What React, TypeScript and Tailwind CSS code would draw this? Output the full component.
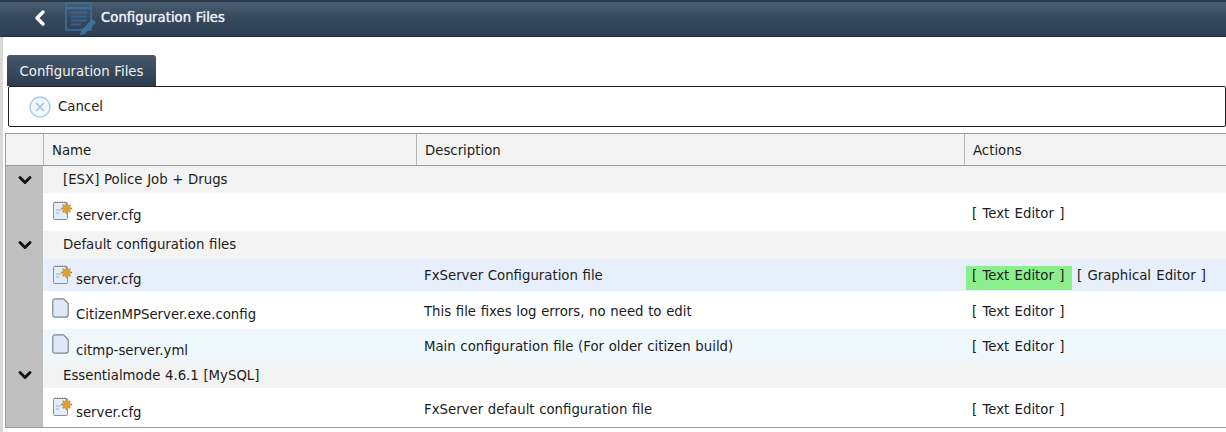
import { ChevronDown, ChevronLeft } from 'lucide-react'

function HeaderIcon() {
  return (
    <svg width="36" height="33" viewBox="0 0 36 33" fill="none" stroke="#3a719f" className="shrink-0">
      <rect x="1" y="1" width="25" height="27" strokeWidth="1.5" />
      <path d="M1 6h25" strokeWidth="2" />
      <path d="M6 10.5h16M6 14.5h16M6 18.5h16M6 22.5h10" strokeWidth="2" opacity="0.7" />
      <path d="M15 33l1.5-5 11-11 3.5 3.5-11 11z" fill="#3a719f" stroke="none" />
    </svg>
  )
}

function CancelIcon() {
  return (
    <svg width="22" height="22" viewBox="0 0 22 22" fill="none" className="shrink-0">
      <circle cx="11" cy="11" r="10" fill="#f2f8fc" stroke="#a9d0e8" strokeWidth="1.5" />
      <path d="M7 7l8 8M15 7l-8 8" stroke="#a5c4dc" strokeWidth="1.5" />
    </svg>
  )
}

function CfgIcon() {
  return (
    <svg width="21" height="21" viewBox="0 0 21 21" fill="none" className="shrink-0">
      <rect x="1.5" y="2.5" width="14" height="17" rx="1" fill="#e3edf9" stroke="#8c8c8c" />
      <path d="M3 2.5v-1M5.5 2.5v-1M8 2.5v-1M10.5 2.5v-1M13 2.5v-1" stroke="#777777" />
      <path d="M4 10h5M4 13h3" stroke="#8fb5dc" />
      <path d="M14.5 3v11M9 8.5h11M10.7 4.7l7.6 7.6M18.3 4.7l-7.6 7.6" stroke="#b58429" strokeWidth="1.5" />
      <circle cx="14.5" cy="8.5" r="4.2" fill="#e0a030" />
    </svg>
  )
}

function FileIcon() {
  return (
    <svg width="17" height="20" viewBox="0 0 17 20" fill="none" className="shrink-0">
      <path d="M.8 3a2.2 2.2 0 0 1 2.2-2.2h8.5l4.7 4.7v11.3a2.4 2.4 0 0 1-2.4 2.4H3a2.2 2.2 0 0 1-2.2-2.2z" fill="#dfe9f7" stroke="#7a8794" strokeWidth="1.2" />
    </svg>
  )
}

function EditorLink({ label, active }: { label: string; active?: boolean }) {
  return (
    <span
      className={
        active
          ? 'inline-block h-[24px] w-[106px] bg-[#8bf08b] pl-[6px] leading-[20px] [word-spacing:1px]'
          : 'inline-block h-[24px] px-[5px] first:pl-[6px] leading-[20px] [word-spacing:1px]'
      }
    >
      [ {label} ]
    </span>
  )
}

type FileRow = {
  icon: 'cfg' | 'file'
  name: string
  description?: string
  graphical?: boolean
  active?: boolean
  rowClass: string
  iconTop: string
  nameTop: string
  cellTop: string
}

const groups: { title: string; titleClass: string; textClass: string; rows: FileRow[] }[] = [
  {
    title: '[ESX] Police Job + Drugs',
    titleClass: 'h-[27px]',
    textClass: '',
    rows: [
      {
        icon: 'cfg',
        name: 'server.cfg',
        rowClass: 'h-[38px] bg-white',
        iconTop: 'pt-[7px]',
        nameTop: 'mt-[6px]',
        cellTop: 'pt-[11px]',
      },
    ],
  },
  {
    title: 'Default configuration files',
    titleClass: 'h-[28px]',
    textClass: '',
    rows: [
      {
        icon: 'cfg',
        name: 'server.cfg',
        description: 'FxServer Configuration file',
        graphical: true,
        active: true,
        rowClass: 'h-[32px] bg-[#e6effb]',
        iconTop: 'pt-[5px]',
        nameTop: 'mt-[6px]',
        cellTop: 'pt-[7px]',
      },
      {
        icon: 'file',
        name: 'CitizenMPServer.exe.config',
        description: 'This file fixes log errors, no need to edit',
        rowClass: 'h-[38px] bg-white',
        iconTop: 'pt-[7px]',
        nameTop: 'mt-[7px]',
        cellTop: 'pt-[11px]',
      },
      {
        icon: 'file',
        name: 'citmp-server.yml',
        description: 'Main configuration file (For older citizen build)',
        rowClass: 'h-[32px] bg-[#eff8fc]',
        iconTop: 'pt-[5px]',
        nameTop: 'mt-[7px]',
        cellTop: 'pt-[8px]',
      },
    ],
  },
  {
    title: 'Essentialmode 4.6.1 [MySQL]',
    titleClass: 'h-[27px]',
    textClass: 'pt-[2px]',
    rows: [
      {
        icon: 'cfg',
        name: 'server.cfg',
        description: 'FxServer default configuration file',
        rowClass: 'h-[39px] bg-white',
        iconTop: 'pt-[8px]',
        nameTop: 'mt-[7px]',
        cellTop: 'pt-[12px]',
      },
    ],
  },
]

export default function App() {
  return (
    <div className="h-[432px] w-[1226px] overflow-hidden bg-white font-['DejaVu_Sans',sans-serif] text-[13.3px] text-[#1c1c1c] [word-spacing:0.4px]">
      <div className="flex h-[37px] items-center border-t-2 border-b border-t-[#2a3744] border-b-[#1d2a38] bg-gradient-to-b from-[#4a5d71] via-[#35475b] to-[#2f4054] pb-[2px] pl-[28px]">
        <ChevronLeft className="h-6 w-6 text-white" strokeWidth={3.5} />
        <div className="ml-[13px]">
          <HeaderIcon />
        </div>
        <span className="text-[#e8edf2] [text-shadow:0_0_1px_#ffffff]">Configuration Files</span>
      </div>

      <div className="h-[395px] border-l-[3px] border-[#d8d8d8] pl-[4px] pt-[18px]">
        <div className="flex h-[31px] w-[149px] items-center justify-center rounded-t-[3px] bg-gradient-to-b from-[#46586a] to-[#2b3c4e] pt-[2px] text-[#eef2f6]">
          Configuration Files
        </div>
        <div className="ml-[1px] flex h-[41px] items-center gap-[7px] rounded-[2px] border border-[#222222] pl-[20px]">
          <CancelIcon />
          Cancel
        </div>

        <div className="ml-[-2px] mt-[6px] border-b border-l border-[#9c9c9c]">
          <div className="grid grid-cols-[37px_373px_548px_1fr] border-y-[1px] border-[#9c9c9c] bg-[#f3f3f3]">
            <div className="h-[31px]" />
            <div className="flex items-center border-l border-[#b5b5b5] pl-[8px] pt-[2px]">Name</div>
            <div className="flex items-center border-l border-[#b5b5b5] pl-[8px] pt-[2px]">Description</div>
            <div className="flex items-center border-l border-[#b5b5b5] pl-[8px] pt-[2px]">Actions</div>
          </div>

          {groups.map((group) => (
            <div key={group.title}>
              <div className={`flex items-center bg-[#f3f3f3] ${group.titleClass}`}>
                <div className="flex h-full w-[37px] shrink-0 items-center justify-center bg-[#bfbfbf]">
                  <ChevronDown className="h-5 w-5 text-[#111111]" strokeWidth={3.5} />
                </div>
                <span className={`pl-[20px] ${group.textClass}`}>{group.title}</span>
              </div>
              {group.rows.map((row) => (
                <div key={row.name + group.title} className={`grid grid-cols-[37px_373px_548px_1fr] ${row.rowClass}`}>
                  <div className="bg-[#bfbfbf]" />
                  <div className={`flex items-start gap-[3px] pl-[9px] ${row.iconTop}`}>
                    <span className="flex w-[21px]">{row.icon === 'cfg' ? <CfgIcon /> : <FileIcon />}</span>
                    <span className={`leading-[20px] ${row.nameTop}`}>{row.name}</span>
                  </div>
                  <div className={`pl-[8px] leading-[20px] ${row.cellTop}`}>{row.description}</div>
                  <div className={`flex items-start pl-[2px] ${row.cellTop}`}>
                    <EditorLink label="Text Editor" active={row.active} />
                    {row.graphical && <EditorLink label="Graphical Editor" />}
                  </div>
                </div>
              ))}
            </div>
          ))}
        </div>
      </div>
    </div>
  )
}
